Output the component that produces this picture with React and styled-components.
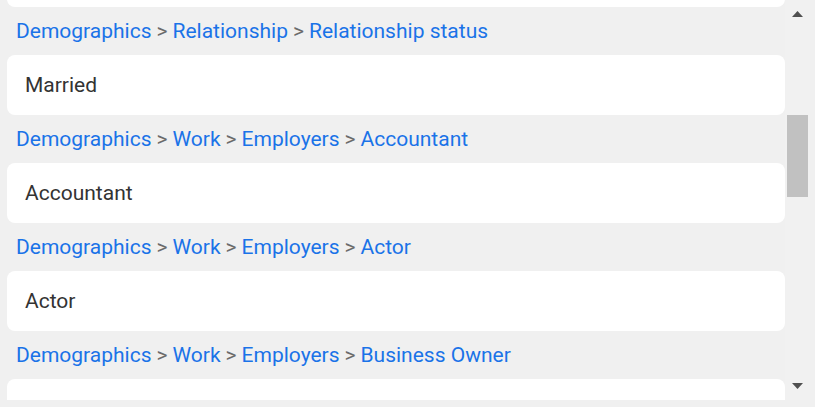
import React, { useLayoutEffect, useRef } from 'react';
import styled, { createGlobalStyle } from 'styled-components';

const GlobalStyle = createGlobalStyle`
  html, body {
    margin: 0;
    padding: 0;
    background: #f0f0f0;
    font-family: Roboto, "Liberation Sans", Arial, sans-serif;
  }
`

const Frame = styled.div`
  display: flex;
  width: 810px;
  height: 400px;
  background: #f0f0f0;
`

const List = styled.div`
  flex: 1;
  height: 100%;
  overflow-y: auto;
  scrollbar-width: none;
  padding-left: 7px;
  &::-webkit-scrollbar {
    display: none;
  }
`

const Item = styled.div`
  display: flex;
  flex-direction: column;
`

const Crumbs = styled.div`
  height: 48px;
  display: flex;
  align-items: center;
  padding-left: 9px;
  font-size: 21px;
  color: #1a73e8;
  white-space: nowrap;
`

const Sep = styled.span`
  color: #6b6b6b;
  margin: 0 5px;
`

const Card = styled.div`
  height: 60px;
  display: flex;
  align-items: center;
  padding-left: 18px;
  background: #ffffff;
  border-radius: 8px;
  font-size: 21px;
  color: #333333;
`

const Scrollbar = styled.div`
  width: 25px;
  height: 100%;
  display: flex;
  flex-direction: column;
  align-items: center;
  background: #f1f1f1;
`

const Arrow = styled.div`
  height: 28px;
  width: 100%;
  display: flex;
  align-items: center;
  justify-content: center;
`

const Track = styled.div`
  flex: 1;
  width: 100%;
  display: flex;
  justify-content: center;
  padding-top: ${p => p.offset}px;
  box-sizing: border-box;
`

const Thumb = styled.div`
  width: 21px;
  height: 82px;
  background: #c1c1c1;
`

const items = [
  { path: ['Demographics', 'Age', 'Age range'], value: '25-34' },
  { path: ['Demographics', 'Relationship', 'Relationship status'], value: 'Married' },
  { path: ['Demographics', 'Work', 'Employers', 'Accountant'], value: 'Accountant' },
  { path: ['Demographics', 'Work', 'Employers', 'Actor'], value: 'Actor' },
  { path: ['Demographics', 'Work', 'Employers', 'Business Owner'], value: 'Business Owner' },
  { path: ['Demographics', 'Work', 'Employers', 'Engineer'], value: 'Engineer' },
]

function Triangle({ up }) {
  return (
    <svg width="11" height="6" viewBox="0 0 11 6">
      <path d={up ? 'M0 6 L5.5 0 L11 6 Z' : 'M0 0 L5.5 6 L11 0 Z'} fill="#505050" />
    </svg>
  )
}

export default function App() {
  const listRef = useRef(null)

  // the list is shown scrolled a little way down
  useLayoutEffect(() => {
    if (listRef.current) listRef.current.scrollTop = 101
  }, [])

  return (
    <>
      <GlobalStyle />
      <Frame>
        <List ref={listRef}>
          {items.map((item, i) => (
            <Item key={i}>
              <Crumbs>
                {item.path.map((p, j) => (
                  <React.Fragment key={j}>
                    {j > 0 && <Sep>&gt;</Sep>}
                    <span>{p}</span>
                  </React.Fragment>
                ))}
              </Crumbs>
              <Card>{item.value}</Card>
            </Item>
          ))}
        </List>
        <Scrollbar>
          <Arrow><Triangle up /></Arrow>
          <Track offset={87}><Thumb /></Track>
          <Arrow><Triangle /></Arrow>
        </Scrollbar>
      </Frame>
    </>
  )
}
